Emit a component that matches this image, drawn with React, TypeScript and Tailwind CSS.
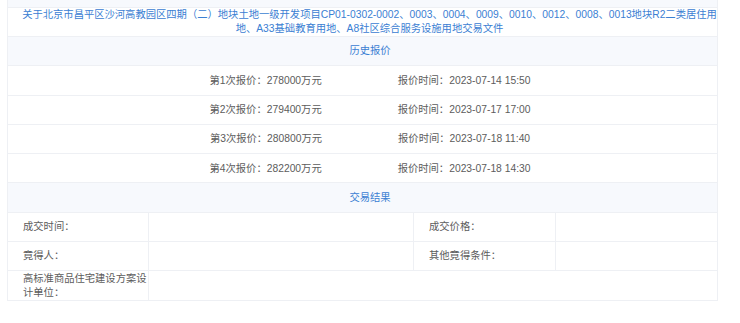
const quotes = [
  { n: 1, price: "278000", time: "2023-07-14 15:50" },
  { n: 2, price: "279400", time: "2023-07-17 17:00" },
  { n: 3, price: "280800", time: "2023-07-18 11:40" },
  { n: 4, price: "282200", time: "2023-07-18 14:30" },
];

const row = "h-[29.3px] box-border border-b border-[#eef0f4]";
const cell = "flex items-center pl-[15px] leading-[14px] border-r border-[#eef0f4]";

function App() {
  return (
    <div
      className="w-[740px] h-[323px] bg-white overflow-hidden text-[10.3px] text-[#5c5c5c]"
      style={{ fontFamily: '"Liberation Sans", "Noto Sans CJK SC", sans-serif' }}
    >
      <div className="ml-[7px] w-[711px] border-x border-[#eef0f4]">
        <div className="h-[7.7px] box-border border-b border-[#eef0f4] bg-[#f7f9fd]" />

        <div className={`${row} flex items-center justify-center pl-[15px] pr-[1px] text-center text-[#3b80d3] leading-[14px]`}>
          <div className="whitespace-nowrap">
            关于北京市昌平区沙河高教园区四期（二）地块土地一级开发项目CP01-0302-0002、0003、0004、0009、0010、0012、0008、0013地块R2二类居住用
            <br />
            地、A33基础教育用地、A8社区综合服务设施用地交易文件
          </div>
        </div>

        <div className={`${row} flex items-center justify-center pl-[15px] bg-[#f7f9fd] text-[#3b80d3]`}>
          历史报价
        </div>

        {quotes.map((q) => (
          <div key={q.n} className={`${row} flex items-center justify-center gap-[76px] pl-[15px]`}>
            <span>
              第{q.n}次报价：{q.price}万元
            </span>
            <span>报价时间：{q.time}</span>
          </div>
        ))}

        <div className={`${row} flex items-center justify-center pl-[15px] bg-[#f7f9fd] text-[#3b80d3]`}>
          交易结果
        </div>

        <div className={`${row} grid grid-cols-[141px_265px_142px_1fr]`}>
          <div className={cell}>成交时间：</div>
          <div className="border-r border-[#eef0f4]" />
          <div className={cell}>成交价格：</div>
          <div />
        </div>

        <div className={`${row} grid grid-cols-[141px_265px_142px_1fr]`}>
          <div className={cell}>竟得人：</div>
          <div className="border-r border-[#eef0f4]" />
          <div className={cell}>其他竟得条件：</div>
          <div />
        </div>

        <div className={`${row} grid grid-cols-[141px_1fr]`}>
          <div className={`${cell} pr-0`}>高标准商品住宅建设方案设计单位：</div>
          <div />
        </div>
      </div>
    </div>
  );
}

export default App;
